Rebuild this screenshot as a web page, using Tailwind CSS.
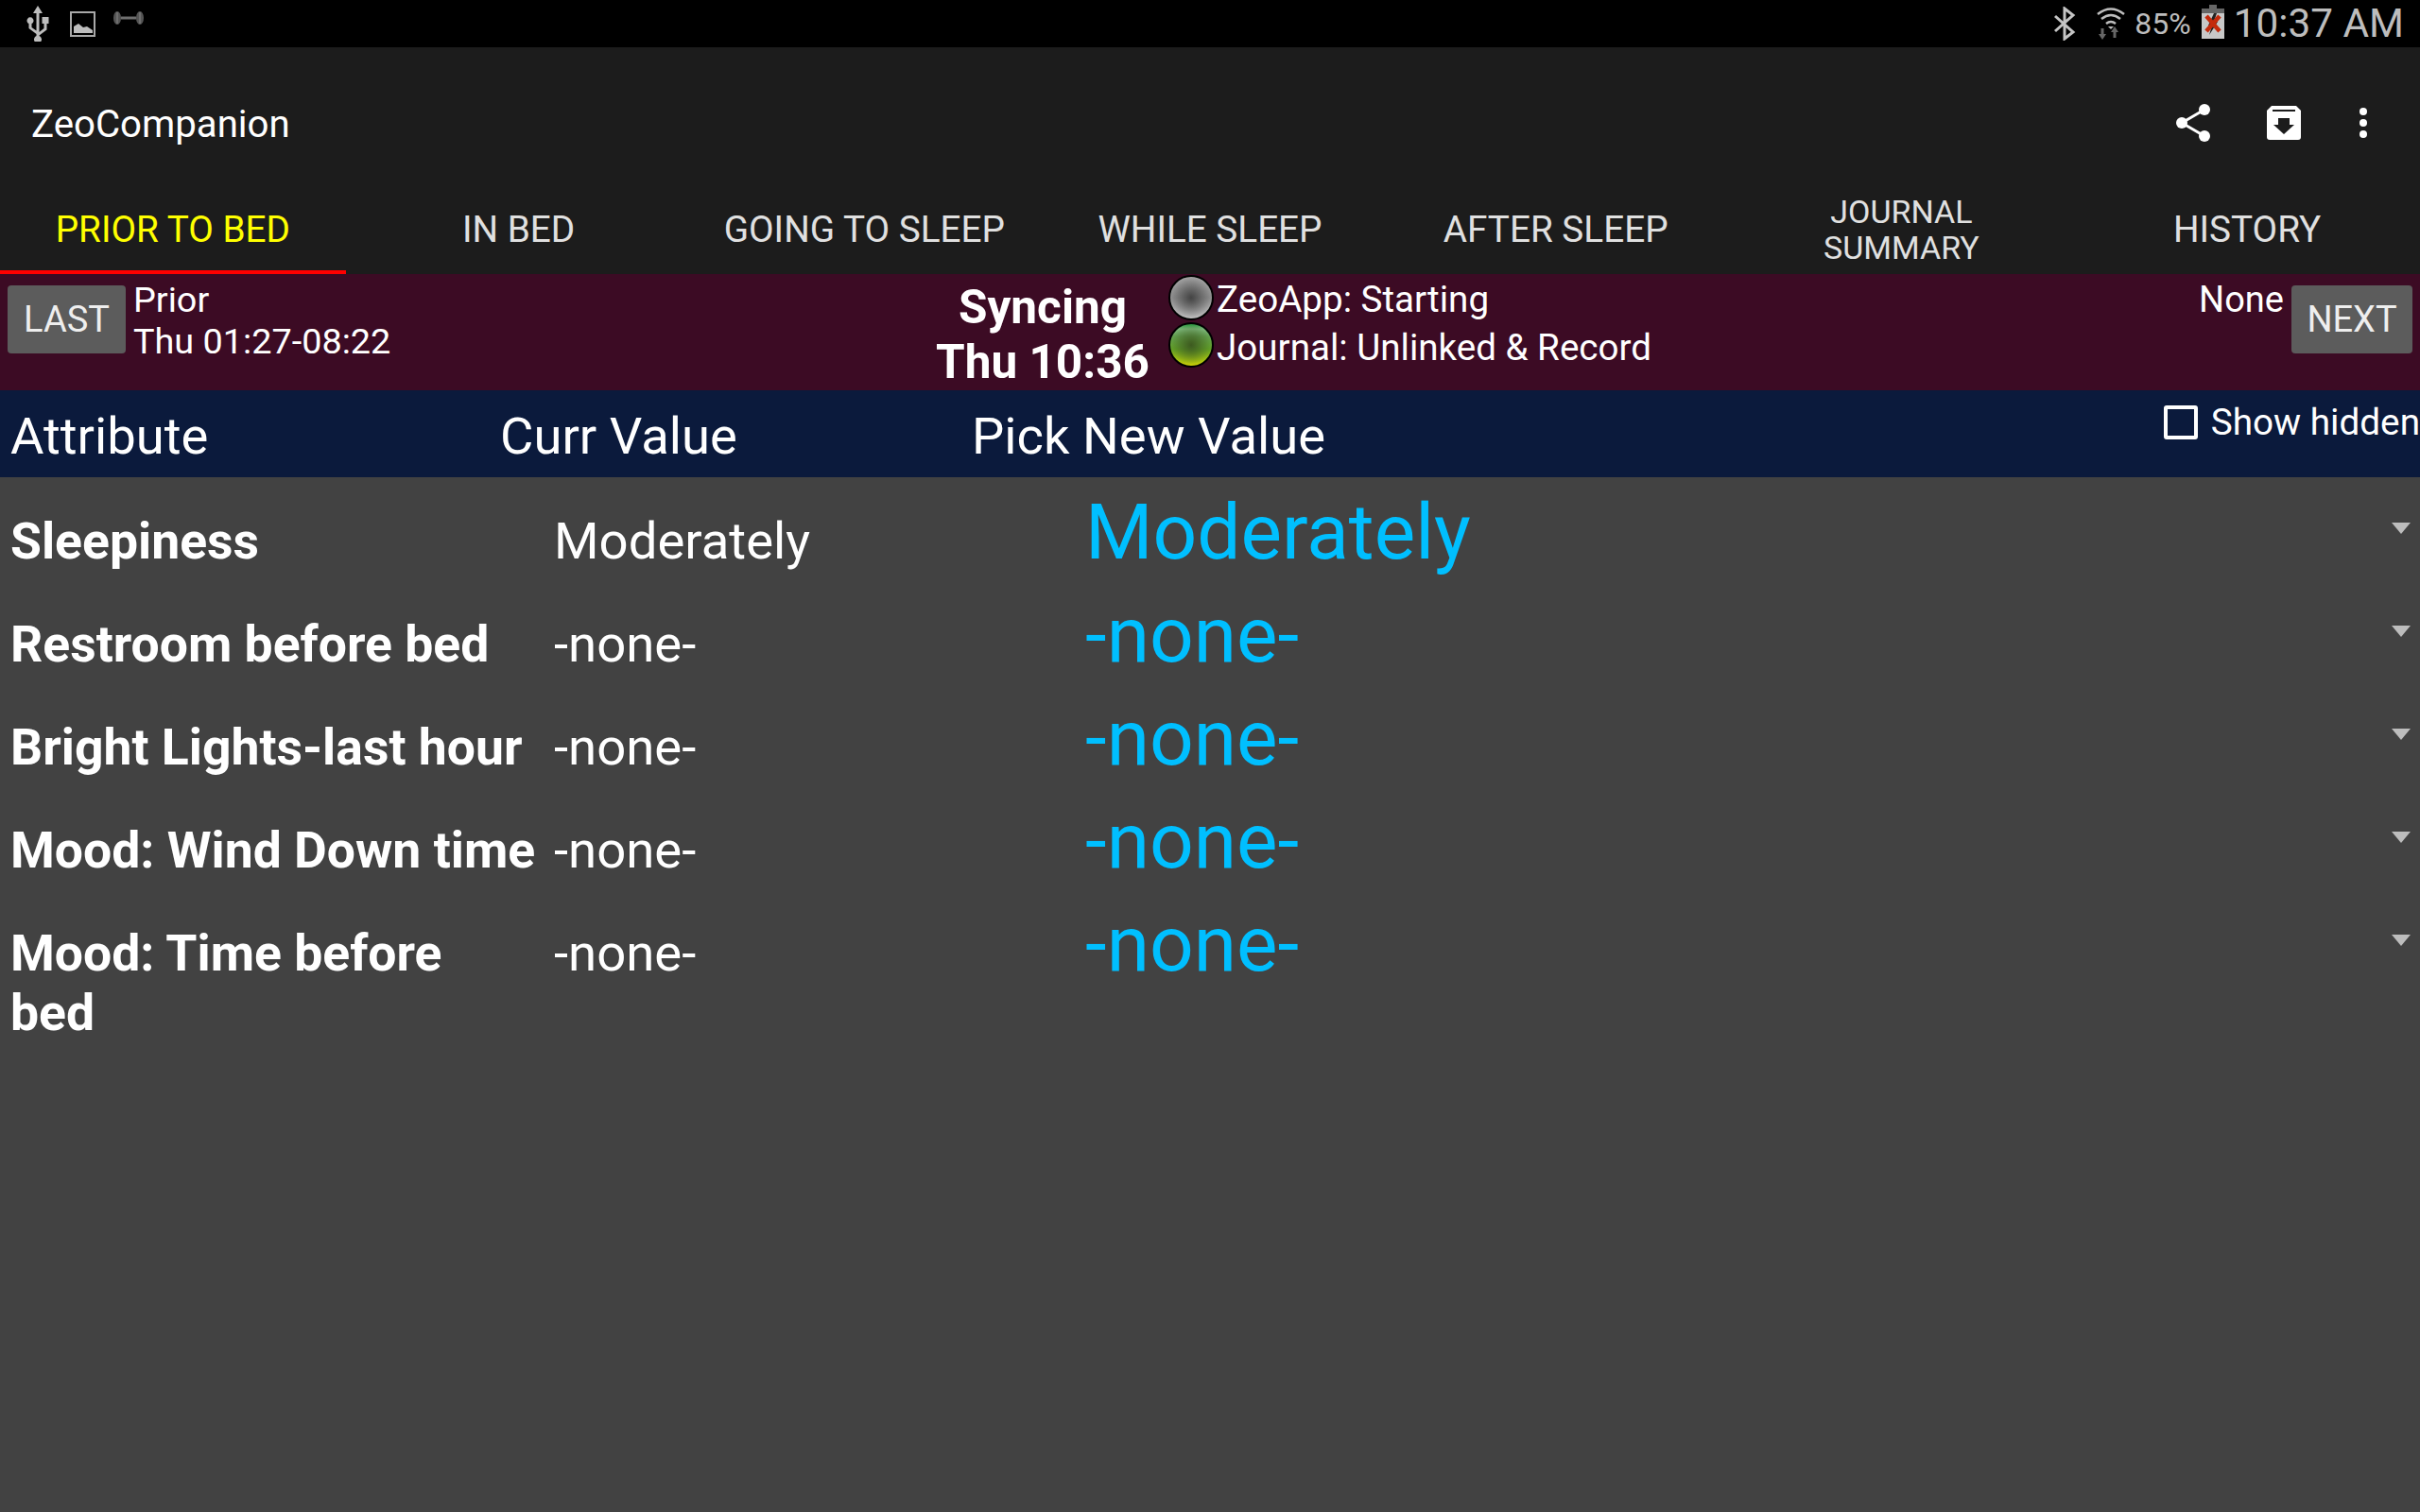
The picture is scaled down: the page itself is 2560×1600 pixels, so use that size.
<!DOCTYPE html>
<html lang="en">
<head>
  <meta charset="UTF-8" />
  <title>ZeoCompanion</title>
  <script src="https://cdn.jsdelivr.net/npm/@tailwindcss/browser@4"></script>
</head>
<body class="bg-[#424242] w-[2560px] h-[1600px] overflow-hidden font-['Roboto',sans-serif] text-white">

  <!-- status bar -->
  <div class="h-[50px] bg-black flex items-center justify-between pl-[27px] pr-[17px]">
    <div class="flex items-center">
      <svg class="w-[26px] h-[38px] mr-[21px]" viewBox="0 0 26 38" fill="#bdbdbd">
        <path d="M13 0l5 8h-3.500v20l5-4v-5h-2v-7h7v7h-2v6.500l-8 6V32a4 4 0 1 1-3 0v-2l-8-6v-5a3.500 3.500 0 1 1 3 0v4l5 3.500V8H8z"/>
      </svg>
      <svg class="w-[27px] h-[27px] mr-[19px]" viewBox="0 0 27 27">
        <rect x="1" y="1" width="25" height="25" fill="none" stroke="#a8a8a8" stroke-width="2"/>
        <path d="M4 23v-7l5-3 5 4 4-1 6 4v3z" fill="#bdbdbd"/>
      </svg>
      <svg class="w-[32px] h-[14px] -mt-[12px]" viewBox="0 0 32 14">
        <ellipse cx="4" cy="7" rx="4" ry="7" fill="#555"/>
        <ellipse cx="28" cy="7" rx="4" ry="7" fill="#555"/>
        <path d="M4 1v12M28 1v12" stroke="#777" stroke-width="1.500"/>
        <path d="M8 7h16" stroke="#6e6e6e" stroke-width="3"/>
      </svg>
    </div>
    <div class="flex items-center text-[#bdbdbd]">
      <svg class="w-[24px] h-[36px] mr-[21px]" viewBox="0 0 24 36" fill="none" stroke="#c4c4c4" stroke-width="3">
        <path d="M2 10l19 17-9 7V2l9 7L2 26"/>
      </svg>
      <svg class="w-[32px] h-[36px] mr-[9px]" viewBox="0 0 32 36">
        <path d="M2 8q14-11 28 0M6 13q10-8 20 0M11 18q5-4 10 0" fill="none" stroke="#bdbdbd" stroke-width="2.500"/>
        <path d="M13 21l3 3 3-3z" fill="#bdbdbd"/>
        <path d="M7 35l-4-6h2.500v-6h3v6H11zM20 21l4 6h-2.500v6h-3v-6H16z" fill="#666"/>
      </svg>
      <span class="text-[32px] mr-[11px]">85%</span>
      <svg class="w-[24px] h-[36px] mr-[10px] -mt-[4px]" viewBox="0 0 24 36">
        <rect x="8" y="0" width="8" height="5" fill="#666"/>
        <rect x="0" y="4" width="24" height="32" fill="#c8c8c8"/>
        <rect x="0" y="4" width="24" height="5" fill="#666"/>
        <path d="M13 9l-6 13h4l-3 10 9-14h-4l3-9z" fill="#222"/>
        <path d="M5 12l14 16M19 12L5 28" stroke="#c42a0c" stroke-width="4.500"/>
      </svg>
      <span class="text-[42.300px] leading-none">10:37 AM</span>
    </div>
  </div>

  <!-- action bar + tabs -->
  <div class="h-[240px] bg-[#1c1c1c] flex flex-col">
    <div class="h-[160px] flex items-center justify-between pl-[33px] pr-[56px]">
      <span class="text-[40.200px] pt-[4px]">ZeoCompanion</span>
      <div class="flex items-center">
        <svg class="w-[36px] h-[40px] mr-[60px]" viewBox="0 0 36 40" fill="white">
          <circle cx="6" cy="20" r="6"/><circle cx="30" cy="6" r="6"/><circle cx="30" cy="34" r="6"/>
          <path d="M6 20L30 6M6 20l24 14" stroke="white" stroke-width="3" fill="none"/>
        </svg>
        <svg class="w-[36px] h-[36px] mr-[62px]" viewBox="0 0 36 36">
          <path d="M5 0h26l5 5v28a3 3 0 0 1-3 3H3a3 3 0 0 1-3-3V5z" fill="white"/>
          <path d="M6 5h24" stroke="#1c1c1c" stroke-width="2"/>
          <path d="M12 13h12v7h5L18 30 7 20h5z" fill="#1c1c1c"/>
        </svg>
        <div class="flex flex-col gap-[4px]">
          <span class="w-[8px] h-[8px] rounded-full bg-white"></span>
          <span class="w-[8px] h-[8px] rounded-full bg-white"></span>
          <span class="w-[8px] h-[8px] rounded-full bg-white"></span>
        </div>
      </div>
    </div>
    <div class="h-[80px] grid grid-cols-7 grid-rows-[80px] text-[38.700px] leading-[38px] text-[#e0e0e0] text-center">
      <div class="flex items-center justify-center pb-[10px] border-b-[4px] border-[#ff0000] text-[#ffff00]">PRIOR TO BED</div>
      <div class="flex items-center justify-center pb-[14px]">IN BED</div>
      <div class="flex items-center justify-center pb-[14px]">GOING TO SLEEP</div>
      <div class="flex items-center justify-center pb-[14px]">WHILE SLEEP</div>
      <div class="flex items-center justify-center pb-[14px]">AFTER SLEEP</div>
      <div class="flex items-center justify-center pb-[14px] text-[34px]">JOURNAL<br>SUMMARY</div>
      <div class="flex items-center justify-center pb-[14px]">HISTORY</div>
    </div>
  </div>

  <!-- sync status row -->
  <div class="h-[123px] bg-[#3c0b24] flex items-start">
    <button class="w-[125px] h-[72px] mt-[12px] ml-[8px] bg-[#5c5c5c] rounded-[4px] text-[38px] text-[#eeeeee]">LAST</button>
    <div class="ml-[8px] text-[37.800px] leading-[44px] pt-[5px] w-[842px]">Prior<br>Thu 01:27-08:22</div>
    <div class="w-[240px] text-center font-bold text-[49.500px] leading-[58px] pt-[6px]">Syncing<br>Thu 10:36</div>
    <div class="ml-[13px] flex flex-col gap-[2px] pt-[1px]">
      <div class="flex items-center text-[38.600px] h-[48px]">
        <span class="w-[48px] h-[48px] rounded-full border-[2px] border-black bg-[radial-gradient(circle,#444444_0%,#44444400_85%),linear-gradient(#b8b8b8,#a0a0a0_50%,#dcdcdc)]"></span>
        <span class="ml-[3px] pt-[4px]">ZeoApp: Starting</span>
      </div>
      <div class="flex items-center text-[38.600px] h-[48px]">
        <span class="w-[48px] h-[48px] rounded-full border-[2px] border-black bg-[radial-gradient(circle,#3d5a20_0%,#3d5a2000_85%),linear-gradient(#22a040,#8ccc90_12%,#6cb05a_30%,#6ab028_60%,#b8d810_85%,#f0f000)]"></span>
        <span class="ml-[3px] pt-[6px]">Journal: Unlinked &amp; Record</span>
      </div>
    </div>
    <div class="ml-auto text-[38px] leading-[44px] pt-[5px] mr-[8px]">None</div>
    <button class="w-[128px] h-[72px] mt-[12px] mr-[8px] bg-[#5c5c5c] rounded-[4px] text-[38px] text-[#eeeeee]">NEXT</button>
  </div>

  <!-- column headers -->
  <div class="h-[92px] bg-[#0b1a3c] flex items-start text-[54.400px]">
    <span class="w-[529px] pl-[11px] pt-[8px]">Attribute</span>
    <span class="w-[499px] pt-[8px]">Curr Value</span>
    <span class="pt-[8px]">Pick New Value</span>
    <label class="ml-auto flex items-center text-[38.700px] pt-[5px]">
      <span class="w-[36px] h-[36px] border-[4px] border-white rounded-[3px] mr-[14px]"></span>
      <span class="whitespace-nowrap">Show hidden</span>
    </label>
  </div>

  <!-- attribute rows -->
  <div class="flex flex-col">
    <div class="h-[109px] flex items-start">
      <div class="w-[586px] pl-[11px] pr-[10px] font-bold text-[53.500px] leading-[63px] pt-[36px]">Sleepiness</div>
      <div class="w-[562px] text-[54.500px] leading-[62px] pt-[36px]">Moderately</div>
      <div class="flex-1 text-[82px] leading-[100px] pt-[8px] text-[#00bfff]">Moderately</div>
      <span class="mt-[48px] mr-[10px] border-x-[10px] border-t-[12px] border-x-transparent border-t-[#bdbdbd]"></span>
    </div>
    <div class="h-[109px] flex items-start">
      <div class="w-[586px] pl-[11px] pr-[10px] font-bold text-[53.500px] leading-[63px] pt-[36px]">Restroom before bed</div>
      <div class="w-[562px] text-[54.500px] leading-[62px] pt-[36px]">-none-</div>
      <div class="flex-1 text-[82px] leading-[100px] pt-[8px] text-[#00bfff]">-none-</div>
      <span class="mt-[48px] mr-[10px] border-x-[10px] border-t-[12px] border-x-transparent border-t-[#bdbdbd]"></span>
    </div>
    <div class="h-[109px] flex items-start">
      <div class="w-[586px] pl-[11px] pr-[10px] font-bold text-[53.500px] leading-[63px] pt-[36px]">Bright Lights-last hour</div>
      <div class="w-[562px] text-[54.500px] leading-[62px] pt-[36px]">-none-</div>
      <div class="flex-1 text-[82px] leading-[100px] pt-[8px] text-[#00bfff]">-none-</div>
      <span class="mt-[48px] mr-[10px] border-x-[10px] border-t-[12px] border-x-transparent border-t-[#bdbdbd]"></span>
    </div>
    <div class="h-[109px] flex items-start">
      <div class="w-[586px] pl-[11px] pr-[10px] font-bold text-[53.500px] leading-[63px] pt-[36px]">Mood: Wind Down time</div>
      <div class="w-[562px] text-[54.500px] leading-[62px] pt-[36px]">-none-</div>
      <div class="flex-1 text-[82px] leading-[100px] pt-[8px] text-[#00bfff]">-none-</div>
      <span class="mt-[48px] mr-[10px] border-x-[10px] border-t-[12px] border-x-transparent border-t-[#bdbdbd]"></span>
    </div>
    <div class="flex items-start">
      <div class="w-[586px] pl-[11px] pr-[60px] font-bold text-[53.500px] leading-[63px] pt-[36px]">Mood: Time before bed</div>
      <div class="w-[562px] text-[54.500px] leading-[62px] pt-[36px]">-none-</div>
      <div class="flex-1 text-[82px] leading-[100px] pt-[8px] text-[#00bfff]">-none-</div>
      <span class="mt-[48px] mr-[10px] border-x-[10px] border-t-[12px] border-x-transparent border-t-[#bdbdbd]"></span>
    </div>
  </div>
</body>
</html>
